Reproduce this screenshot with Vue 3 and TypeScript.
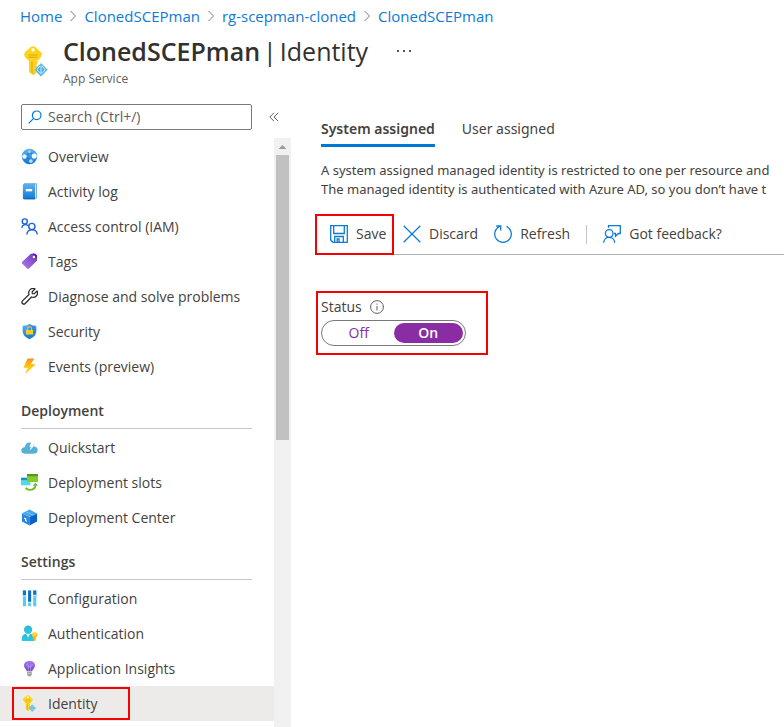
<script setup lang="ts">
import { ref } from 'vue'

interface MenuItem { label: string; icon: string }
interface MenuGroup { title: string; items: MenuItem[] }

const crumbs: string[] = ['Home', 'ClonedSCEPman', 'rg-scepman-cloned', 'ClonedSCEPman']

const groups: MenuGroup[] = [
  {
    title: '',
    items: [
      { label: 'Overview', icon: 'globe' },
      { label: 'Activity log', icon: 'book' },
      { label: 'Access control (IAM)', icon: 'people' },
      { label: 'Tags', icon: 'tag' },
      { label: 'Diagnose and solve problems', icon: 'wrench' },
      { label: 'Security', icon: 'shield' },
      { label: 'Events (preview)', icon: 'bolt' },
    ],
  },
  {
    title: 'Deployment',
    items: [
      { label: 'Quickstart', icon: 'cloud' },
      { label: 'Deployment slots', icon: 'slots' },
      { label: 'Deployment Center', icon: 'cube' },
    ],
  },
  {
    title: 'Settings',
    items: [
      { label: 'Configuration', icon: 'sliders' },
      { label: 'Authentication', icon: 'user' },
      { label: 'Application Insights', icon: 'bulb' },
      { label: 'Identity', icon: 'key' },
    ],
  },
]

const search = ref('')
const selected = ref('Identity')
const tab = ref('System assigned')
const tabs: string[] = ['System assigned', 'User assigned']
const status = ref('On')
</script>

<template>
  <div class="page">
    <svg class="defs" width="0" height="0" aria-hidden="true">
      <defs>
        <linearGradient id="blue" x1="0" y1="0" x2="0" y2="1"><stop offset="0" stop-color="#5eb2f2" /><stop offset="1" stop-color="#0f78d4" /></linearGradient>
        <linearGradient id="violet" x1="1" y1="0" x2="0" y2="1"><stop offset="0" stop-color="#6b35bd" /><stop offset="1" stop-color="#b27bf0" /></linearGradient>
        <linearGradient id="bulbfill" x1="0" y1="0" x2="0" y2="1"><stop offset="0" stop-color="#a67af4" /><stop offset="1" stop-color="#7043c4" /></linearGradient>
        <linearGradient id="gold" x1="0" y1="0" x2="0" y2="1"><stop offset="0" stop-color="#f78d1e" /><stop offset="0.5" stop-color="#fec50e" /><stop offset="1" stop-color="#ffdb22" /></linearGradient>
        <linearGradient id="teal" x1="0" y1="0" x2="0" y2="1"><stop offset="0" stop-color="#27b8d6" /><stop offset="1" stop-color="#2cc9e8" /></linearGradient>
        <symbol id="i-globe" viewBox="0 0 18 18">
          <circle cx="9" cy="9" r="8.2" fill="url(#blue)" />
          <path d="M4.500 9.500L9.500 4.500L14 8.500M4.500 9.500L10.500 13.500" fill="none" stroke="#2a7fcc" stroke-width="1.200" />
          <circle cx="3.700" cy="9" r="2.400" fill="#eef7fe" /><circle cx="9" cy="4" r="1.500" fill="#a9d6f8" />
          <circle cx="14" cy="8.500" r="2.700" fill="#fff" /><circle cx="10.500" cy="13.800" r="2" fill="#b9def9" />
        </symbol>
        <symbol id="i-book" viewBox="0 0 18 18">
          <path d="M3.500.8H16.500V16H3.500Z" fill="#d8eaf5" stroke="#3a86ad" stroke-width=".7" />
          <path d="M2 2.300Q2 .7 3.500.7H14.800V17.300H3.500Q2 17.300 2 15.700Z" fill="url(#blue)" />
          <path d="M2.300 16Q2.600 17.300 4 17.300H14.800V16.300H3.500Z" fill="#0b61a8" />
          <rect x="5" y="6.300" width="6.800" height="2.500" fill="#fff" />
        </symbol>
        <symbol id="i-people" viewBox="0 0 18 18">
          <g fill="none" stroke="#1b63dc" stroke-width="1.500">
            <circle cx="4" cy="3.600" r="2.700" /><circle cx="11.500" cy="9" r="3.300" />
            <path d="M.8 10.500C1 7.500 4.500 5.800 7.800 8.200M6.300 17.400C6.300 10.700 16.900 10.700 17.200 17.400" />
          </g>
        </symbol>
        <symbol id="i-tag" viewBox="0 0 18 18">
          <path d="M10.500.8H15.300L17 2.500V8L8.500 16.500Q7.500 17.300 6.500 16.500L1.200 11.200Q.6 10.200 1.300 9.300Z" fill="url(#violet)" />
          <circle cx="13.700" cy="4.300" r="1.300" fill="#fff" /><path d="M12.500.8Q16.300 1 16.200 5.500" fill="none" stroke="#2f1973" stroke-width="1" />
        </symbol>
        <symbol id="i-wrench" viewBox="0 0 18 18">
          <path d="M14.900.9A4.700 4.700 0 0 0 8.500 6.900L1.600 13.600A1.950 1.950 0 0 0 4.400 16.400L11 9.500A4.700 4.700 0 0 0 17.100 3.200L14 6.100L12 5.900L11.800 4Z" fill="#fff" stroke="#292827" stroke-width="1.300" stroke-linejoin="round" />
        </symbol>
        <symbol id="i-shield" viewBox="0 0 18 18">
          <path d="M9 .8Q12 3 16.300 2.900V8.500Q16.300 14 9 17.300Q1.700 14 1.700 8.500V2.900Q6 3 9 .8Z" fill="url(#blue)" />
          <path d="M9 1.800V16.300Q15.500 13.500 15.400 8V3.700Q11.700 3.600 9 1.800Z" fill="#1b7fd3" opacity=".65" />
          <path d="M6.800 8V6.200A2.200 2.200 0 0 1 11.200 6.200V8" fill="none" stroke="#f6b91c" stroke-width="1.300" /><rect x="5.200" y="7.300" width="7.600" height="5" rx=".6" fill="#ffca28" />
        </symbol>
        <symbol id="i-bolt" viewBox="0 0 18 18">
          <path d="M7 .5H14L10.400 6.600H15.500L4 17.500L7.200 10.200H2.500Z" fill="url(#gold)" />
        </symbol>
        <symbol id="i-cloud" viewBox="0 0 18 18">
          <path d="M4 15.500Q.2 15.500.3 12Q.5 8.800 4 8.700Q4.500 3.500 9.500 3.600Q14 4 14.300 8.100Q17.800 8.500 17.700 11.700Q17.500 15.500 14 15.500Z" fill="#56b1d9" />
          <path d="M11.200 3H14.500L12.900 6.300H14.600L9.300 12.200L10.600 8.300H8.700Z" fill="#fff" />
        </symbol>
        <symbol id="i-slots" viewBox="0 0 18 18">
          <path d="M0 4H10V12H0Z" fill="#56d7f1" /><path d="M0 4H8V6.500H0Z" fill="#1594bb" />
          <rect x="6.300" y="0" width="11.700" height="8.500" fill="#85cc2b" /><rect x="6.300" y="0" width="11.700" height="2.400" fill="#529c1d" />
          <path d="M5 14.700Q6.500 17 10 16.800Q15 16.300 15.300 12" fill="none" stroke="#6dbf21" stroke-width="2" /><path d="M12.500 12.500L15.300 9L18 12.500Z" fill="#6dbf21" />
        </symbol>
        <symbol id="i-cube" viewBox="0 0 18 18">
          <path d="M1 4.700L9 .6L17 4.700L9.500 8.500Z" fill="#43a5ee" /><path d="M1 4.700L9 8.500V17.400L1 13.300Z" fill="#2586df" /><path d="M9 8.500L17 4.700V13.300L9 17.400Z" fill="#0b62c4" />
          <path d="M5 2.700L13 6.600" stroke="#83cafa" stroke-width="1" /><path d="M3.300 9.500L5 10.500V12.300L6.300 12.900" stroke="#fff" stroke-width="1.200" fill="none" />
        </symbol>
        <symbol id="i-sliders" viewBox="0 0 18 18">
          <path d="M2 .5H5.300V17.200H2ZM7.500.5H10.700V17.200H7.500ZM12.900.5H16.200V17.200H12.900Z" fill="#5bc9f3" />
          <path d="M2 .5H5.300V6H2ZM7.500.5H10.700V13H7.500ZM12.900.5H16.200V6H12.900Z" fill="#1170cf" /><path d="M2 5.500H5.300V7H2ZM7.500 12.500H10.700V14H7.500ZM12.900 5H16.200V6.500H12.900Z" fill="#b9e9fa" />
        </symbol>
        <symbol id="i-user" viewBox="0 0 18 18">
          <circle cx="7.500" cy="5" r="4.400" fill="url(#teal)" /><path d="M.6 15.500Q1 9.400 5 9.400H10Q14 9.400 14.400 15.500Q14.400 17 13 17H2Q.6 17 .6 15.500Z" fill="url(#teal)" />
          <path d="M5.500 9.500L7.500 13.500L9.500 9.500Z" fill="#e9fbff" /><circle cx="14.500" cy="10.500" r="2.900" fill="#ffc81e" /><path d="M13.300 12H15.700V16L14.500 17.200L13.300 16Z" fill="#f8b716" /><circle cx="14.500" cy="9.700" r=".7" fill="#fff" />
        </symbol>
        <symbol id="i-bulb" viewBox="0 0 18 18">
          <path d="M6.200 12Q6 10.500 4.500 9Q3 7.500 3.200 5.300Q3.700 1 9 .7Q14.300 1 14.800 5.300Q15 7.500 13.500 9Q12 10.500 11.800 12Z" fill="url(#bulbfill)" />
          <path d="M7.800 12V7Q5.500 6.500 6 4.700Q7 4 7.800 5V7H10.200V5Q11 4 12 4.700Q12.500 6.500 10.200 7V12" fill="none" stroke="#c9aef2" stroke-width=".6" /><path d="M6.300 12.500H11.700V15.500L10 17.400H8L6.300 15.500Z" fill="#a4a4a4" /><path d="M6.300 14.200H11.700" stroke="#d5d5d5" stroke-width=".7" />
        </symbol>
        <symbol id="i-key" viewBox="0 0 24 31">
          <path d="M7 .8Q9 -.3 11 .8L17.200 6.500Q18.600 8.300 17.200 10.500Q15.500 13.500 13.500 14.500V17.500L12.200 19L13.500 20.500V22L12.200 23.500L13.500 25L12.800 26.500L9.500 29.500L5 26V14.500Q2.500 13.500.8 10.500Q-.5 8.300.8 6.500Z" fill="#fdd419" />
          <path d="M7.300 15.500V26.500L8.600 27.500V15.500Z" fill="#e7a719" /><path d="M4.500 9H13.500M4.500 11.200H13.500" stroke="#d8a51c" stroke-width="1" /><circle cx="9" cy="3.900" r="1.700" fill="#fff" />
          <path d="M17 17.200L23.600 23.800L17 30.400L10.400 23.800Z" fill="#4eb0dc" stroke="#a9ddf1" stroke-width=".8" /><path d="M17 19.500V27.500M16 19.800L12.800 24L17 27.500L21.200 24L18 19.800" fill="none" stroke="#c6e9f7" stroke-width="1" />
        </symbol>
      </defs>
    </svg>

    <header class="header">
      <nav class="crumbs" aria-label="Breadcrumb">
        <template v-for="(crumb, i) in crumbs" :key="i">
          <svg v-if="i > 0" class="chevron" viewBox="0 0 8 12" aria-hidden="true"><path d="M1.500 1L6.500 6L1.500 11" /></svg>
          <a href="#">{{ crumb }}</a>
        </template>
      </nav>
      <div class="heading">
        <svg class="logo" aria-hidden="true"><use href="#i-key" /></svg>
        <div>
          <div class="title-row">
            <h1>ClonedSCEPman<span>|</span><span>Identity</span></h1>
            <button class="more" type="button" aria-label="More"><i></i><i></i><i></i></button>
          </div>
          <p class="kind">App Service</p>
        </div>
      </div>
    </header>

    <div class="body">
      <aside class="side">
        <div class="search-row">
          <label class="search">
            <svg viewBox="0 0 14 14" aria-hidden="true"><circle cx="8.700" cy="5.300" r="4.300" /><path d="M5.600 8.400L.7 13.300" /></svg>
            <input v-model="search" type="text" placeholder="Search (Ctrl+/)" aria-label="Search" />
          </label>
          <button class="collapse" type="button" aria-label="Collapse menu"><svg viewBox="0 0 10 10"><path d="M5 .8L.8 5L5 9.200M9.200.8L5 5L9.200 9.200" /></svg></button>
        </div>
        <div class="menu-area">
          <nav class="menu" aria-label="Resource menu">
            <section v-for="group in groups" :key="group.title">
              <h2 v-if="group.title">{{ group.title }}</h2>
              <a
                v-for="item in group.items"
                :key="item.label"
                href="#"
                class="item"
                :class="{ selected: item.label === selected }"
                @click.prevent="selected = item.label"
              >
                <svg aria-hidden="true"><use :href="`#i-${item.icon}`" /></svg>
                <span>{{ item.label }}</span>
                <b v-if="item.label === 'Identity'" class="mark"></b>
              </a>
            </section>
          </nav>
          <div class="scroll" aria-hidden="true">
            <svg viewBox="0 0 17 17"><path d="M4.500 11L8.500 7L12.500 11Z" /></svg>
            <div class="thumb"></div>
          </div>
        </div>
      </aside>

      <main class="main">
        <div class="tabs" role="tablist">
          <button
            v-for="name in tabs"
            :key="name"
            type="button"
            role="tab"
            :aria-selected="tab === name"
            :class="{ active: tab === name }"
            @click="tab = name"
          >{{ name }}</button>
        </div>
        <p class="intro">
          A system assigned managed identity is restricted to one per resource and<br />
          The managed identity is authenticated with Azure AD, so you don’t have t
        </p>
        <div class="toolbar">
          <button type="button" class="save">
            <svg viewBox="0 0 18 18" aria-hidden="true"><path d="M.7.700H17.300V17.300H3L.7 15Z M3.700.7V8.500H14.300V.7 M4.700 17.300V11.500H13.300V17.300 M7.200 17V14H9V17" /></svg>
            Save
          </button>
          <button type="button">
            <svg viewBox="0 0 18 18" aria-hidden="true"><path d="M.7.700L17.300 17.300M17.300.7L.7 17.300" /></svg>
            Discard
          </button>
          <button type="button" class="refresh">
            <svg viewBox="0 0 18 18" aria-hidden="true"><path d="M12.500 1.500A8.300 8.300 0 1 1 5.500 1.500M2.200 1H6.700V5.500" /></svg>
            Refresh
          </button>
          <span class="divider"></span>
          <button type="button">
            <svg viewBox="0 0 18 18" aria-hidden="true"><circle cx="6.200" cy="8.500" r="3.800" /><path d="M.7 17.700C.9 10.700 11.500 10.700 11.700 17.700M5.500 2.800V.7H17.300V8.500H15.500L12.500 11.300V8.500H11" /></svg>
            Got feedback?
          </button>
        </div>
        <fieldset class="status">
          <legend>
            Status
            <svg viewBox="0 0 14 14" aria-hidden="true"><circle cx="7" cy="7" r="6.400" /><path d="M7 6V10.500M7 3.500V4.700" /></svg>
          </legend>
          <div class="toggle">
            <label v-for="value in ['Off', 'On']" :key="value" :class="{ on: status === value }">
              <input v-model="status" type="radio" name="status" :value="value" />{{ value }}
            </label>
          </div>
        </fieldset>
      </main>
    </div>
  </div>
</template>

<style>
body { margin: 0; background: #fff; }
</style>

<style scoped>
* { box-sizing: border-box; }
.page { min-height: 100vh; display: flex; flex-direction: column; font: 14px/20px "Open Sans", "Noto Sans", sans-serif; color: #444241; }
.defs { position: absolute; }
button { border: 0; background: none; padding: 0; margin: 0; font: inherit; color: inherit; cursor: pointer; }
a { text-decoration: none; color: inherit; }
svg { flex: none; }

.header { height: 104px; padding: 6px 20px 0; }
.crumbs { display: flex; align-items: center; gap: 7px; font-size: 15px; color: #0f7bd5; white-space: nowrap; }
.chevron { width: 8px; height: 12px; fill: none; stroke: #7a7876; }
.heading { display: flex; gap: 15px; padding: 9px 0 0 4px; }
.logo { width: 24px; height: 31px; margin-top: 11px; }
.title-row { display: flex; align-items: center; gap: 29px; height: 32px; }
h1 { display: flex; gap: 3px; margin: 0; font-size: 25px; line-height: 32px; font-weight: 600; color: #323130; white-space: nowrap; }
h1 span { font-weight: 400; }
.more { display: flex; gap: 4px; }
.more i { width: 2px; height: 2px; background: #555; }
.kind { margin: 2px 0 0; font-size: 12px; color: #605e5c; }

.body { flex: 1; display: flex; }
.side { flex: none; width: 291px; display: flex; flex-direction: column; }
.search-row { display: flex; align-items: center; padding-left: 21px; gap: 17px; }
.search { width: 231px; height: 26px; display: flex; align-items: center; gap: 6px; padding-left: 6px; border: 1px solid #7b7977; border-radius: 2px; }
.search svg { width: 14px; height: 14px; fill: none; stroke: #0078d4; stroke-width: 1.2; }
.search input { flex: 1; min-width: 0; border: 0; outline: 0; padding: 0; font: inherit; line-height: 20px; background: none; }
.search input::placeholder { color: #605e5c; opacity: 1; }
.collapse { display: flex; }
.collapse svg { width: 10px; height: 10px; fill: none; stroke: #605e5c; }
.menu-area { flex: 1; display: flex; margin-top: 8px; }
.menu { flex: 1; padding-top: 1px; }
.item { position: relative; display: flex; align-items: center; gap: 10px; height: 35px; padding-left: 21px; white-space: nowrap; }
.item svg { width: 17px; height: 17px; }
.selected { background: #edebe9; }
.mark { position: absolute; left: 12px; top: 1px; width: 118px; height: 33px; border: 2px solid #f60000; }
h2 { height: 45px; margin: 0 22px 1px 21px; padding-top: 17px; border-bottom: 1px solid #c8c6c4; font-size: 14px; line-height: 20px; font-weight: 600; }
.scroll { width: 17px; background: #f1f1f1; display: flex; flex-direction: column; align-items: center; }
.scroll svg { width: 17px; height: 17px; fill: #9b9b9b; }
.thumb { width: 13px; height: 285px; background: #c1c1c1; }

.main { flex: 1; min-width: 0; padding: 15px 0 0 24px; }
.tabs { display: flex; gap: 27px; padding-left: 6px; font-family: "Noto Sans", "Open Sans", sans-serif; }
.tabs button { height: 28px; padding-bottom: 5px; border-bottom: 3px solid transparent; }
.tabs .active { border-color: #0078d4; font-weight: 600; }
.intro { margin: 14px 0 0; padding-left: 6px; font-family: "Noto Sans", "Open Sans", sans-serif; font-size: 13px; line-height: 19px; white-space: nowrap; }
.toolbar { display: flex; align-items: center; height: 41px; margin-top: 15px; border-bottom: 1px solid #b3b0ad; white-space: nowrap; }
.toolbar button { display: flex; align-items: center; gap: 8px; height: 41px; }
.toolbar svg { width: 18px; height: 18px; fill: none; stroke: #0f7bd5; stroke-width: 1.3; }
.toolbar .save { width: 79px; height: 41px; padding-left: 13px; margin-right: 9px; border: 2px solid #f60000; }
.toolbar .refresh { margin-left: 16px; }
.divider { width: 1px; height: 19px; margin: 0 16px; background: #c8c6c4; }
.status { width: 172px; height: 64px; margin: 36px 0 0 1px; padding: 0 0 0 3px; border: 2px solid #f60000; }
legend { float: left; width: 100%; display: flex; align-items: center; gap: 8px; height: 27px; padding: 0; }
legend svg { width: 14px; height: 14px; fill: none; stroke: #605e5c; }
.toggle { float: left; width: 145px; height: 26px; display: flex; padding: 2px; border: 1px solid #7b7977; border-radius: 13px; }
.toggle label { position: relative; flex: 1; line-height: 20px; border-radius: 10px; text-align: center; color: #8a2da5; cursor: pointer; }
.toggle .on { background: #8a2da5; color: #fff; font-weight: 600; }
.toggle input { position: absolute; opacity: 0; margin: 0; }
</style>
